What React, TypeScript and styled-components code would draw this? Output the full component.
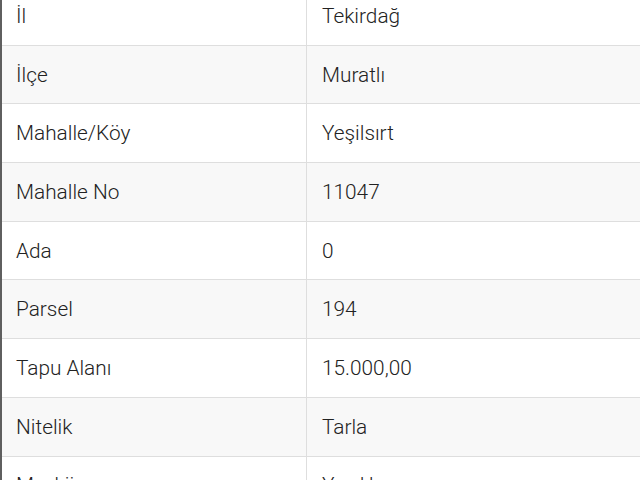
import React from "react";
import styled, { createGlobalStyle } from "styled-components";

const Global = createGlobalStyle`
  html, body { margin: 0; padding: 0; background: #fff; overflow: hidden; }
  body { font-family: Roboto, "Noto Sans", "Liberation Sans", sans-serif; }
`;

const Page = styled.div`
  width: 640px;
  height: 480px;
  overflow: hidden;
  background: #fff;
`;

const Table = styled.div`
  margin-top: -13px;
  width: 660px;
  border-left: 2px solid #5f5f5f;
  display: flex;
  flex-direction: column;
`;

const Row = styled.div<{ $shaded: boolean }>`
  display: grid;
  grid-template-columns: 305px 1fr;
  height: 58.7px;
  box-sizing: border-box;
  border-bottom: 1px solid #dedede;
  background: ${(p) => (p.$shaded ? "#f8f8f8" : "#ffffff")};
`;

const Cell = styled.div<{ $divider?: boolean }>`
  display: flex;
  align-items: center;
  padding-left: ${(p) => (p.$divider ? "14px" : "15px")};
  border-right: ${(p) => (p.$divider ? "1px solid #dedede" : "none")};
  font-size: 20.8px;
  font-weight: 300;
  color: #222;
  white-space: nowrap;
`;

const rows: [string, string][] = [
  ["İl", "Tekirdağ"],
  ["İlçe", "Muratlı"],
  ["Mahalle/Köy", "Yeşilsırt"],
  ["Mahalle No", "11047"],
  ["Ada", "0"],
  ["Parsel", "194"],
  ["Tapu Alanı", "15.000,00"],
  ["Nitelik", "Tarla"],
  ["Mevkii", "Yazılık"],
];

export default function App() {
  return (
    <Page>
      <Global />
      <Table>
        {rows.map(([k, v], i) => (
          <Row key={k} $shaded={i % 2 === 1}>
            <Cell $divider>{k}</Cell>
            <Cell>{v}</Cell>
          </Row>
        ))}
      </Table>
    </Page>
  );
}
